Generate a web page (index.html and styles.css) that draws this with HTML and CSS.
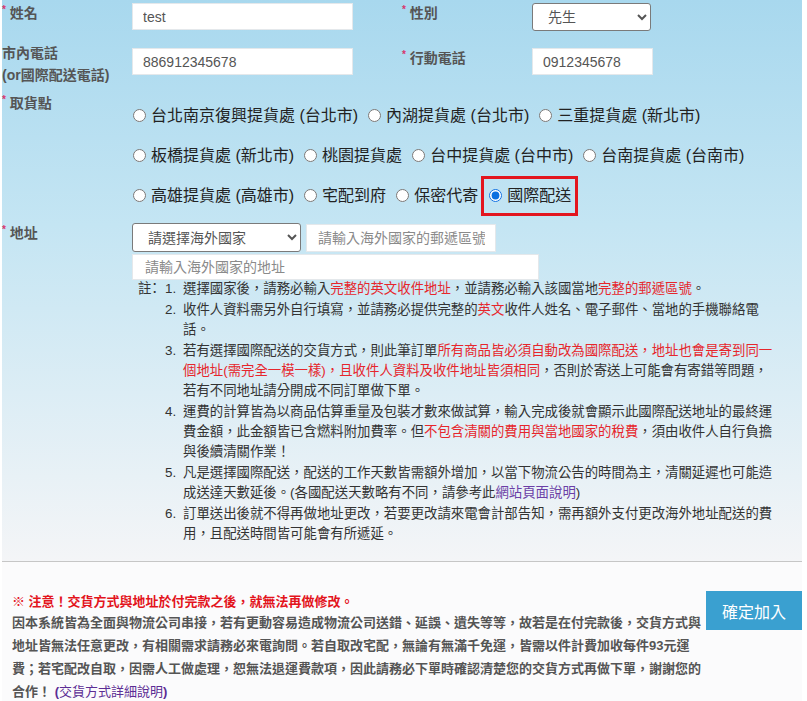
FILE: index.html
```html
<!DOCTYPE html>
<html lang="zh-Hant">
<head>
<meta charset="utf-8">
<title>訂購資料</title>
<link rel="stylesheet" href="styles.css">
</head>
<body>
<div class="page">
  <div class="panel">
    <div class="row row-name">
      <div class="label"><span class="req">*</span> 姓名</div>
      <div class="field"><input class="txt w-name" type="text" value="test"></div>
      <div class="label"><span class="req">*</span> 性別</div>
      <div class="field"><select class="sel w-sex"><option>先生</option><option>小姐</option></select></div>
    </div>
    <div class="row row-phone">
      <div class="label label-2l">市內電話<br>(or國際配送電話)</div>
      <div class="field pt"><input class="txt w-name" type="text" value="886912345678"></div>
      <div class="label pt"><span class="req">*</span> 行動電話</div>
      <div class="field pt"><input class="txt w-mobile" type="text" value="0912345678"></div>
    </div>
    <div class="row row-pick">
      <div class="label"><span class="req">*</span> 取貨點</div>
      <div class="opts">
        <div class="opt-line">
          <label class="opt"><input type="radio" name="pick">台北南京復興提貨處 (台北市)</label><label class="opt"><input type="radio" name="pick">內湖提貨處 (台北市)</label><label class="opt"><input type="radio" name="pick">三重提貨處 (新北市)</label>
        </div>
        <div class="opt-line">
          <label class="opt"><input type="radio" name="pick">板橋提貨處 (新北市)</label><label class="opt"><input type="radio" name="pick">桃園提貨處</label><label class="opt"><input type="radio" name="pick">台中提貨處 (台中市)</label><label class="opt"><input type="radio" name="pick">台南提貨處 (台南市)</label>
        </div>
        <div class="opt-line">
          <label class="opt"><input type="radio" name="pick">高雄提貨處 (高雄市)</label><label class="opt"><input type="radio" name="pick">宅配到府</label><label class="opt"><input type="radio" name="pick">保密代寄</label><label class="opt hl"><input type="radio" name="pick" checked>國際配送</label>
        </div>
      </div>
    </div>
    <div class="row row-addr">
      <div class="label"><span class="req">*</span> 地址</div>
      <div class="addr">
        <div class="addr-top">
          <select class="sel w-country"><option>請選擇海外國家</option></select>
          <input class="txt w-zip" type="text" placeholder="請輸入海外國家的郵遞區號">
        </div>
        <input class="txt w-addr" type="text" placeholder="請輸入海外國家的地址">
      </div>
    </div>
    <div class="notes">
      <span class="note-head">註：</span>
      <ol class="note-list">
        <li><span class="t">選擇國家後，請務必輸入<span class="red">完整的英文收件地址</span>，並請務必輸入該國當地<span class="red">完整的郵遞區號</span>。</span></li>
        <li><span class="t">收件人資料需另外自行填寫，並請務必提供完整的<span class="red">英文</span>收件人姓名、電子郵件、當地的手機聯絡電話。</span></li>
        <li><span class="t">若有選擇國際配送的交貨方式，則此筆訂單<span class="red">所有商品皆必須自動改為國際配送，地址也會是寄到同一個地址(需完全一模一樣)，且收件人資料及收件地址皆須相同</span>，否則於寄送上可能會有寄錯等問題，若有不同地址請分開成不同訂單做下單。</span></li>
        <li><span class="t">運費的計算皆為以商品估算重量及包裝才數來做試算，輸入完成後就會顯示此國際配送地址的最終運費金額，此金額皆已含燃料附加費率。但<span class="red">不包含清關的費用與當地國家的稅費</span>，須由收件人自行負擔與後續清關作業！</span></li>
        <li><span class="t">凡是選擇國際配送，配送的工作天數皆需額外增加，以當下物流公告的時間為主，清關延遲也可能造成送達天數延後。(各國配送天數略有不同，請參考此<a class="link" href="#">網站頁面說明</a>)</span></li>
        <li><span class="t">訂單送出後就不得再做地址更改，若要更改請來電會計部告知，需再額外支付更改海外地址配送的費用，且配送時間皆可能會有所遞延。</span></li>
      </ol>
    </div>
  </div>
  <div class="bottom">
    <div class="notice">
      <div class="warn">※ 注意！交貨方式與地址於付完款之後，就無法再做修改。</div>
      <p class="desc">因本系統皆為全面與物流公司串接，若有更動容易造成物流公司送錯、延誤、遺失等等，故若是在付完款後，交貨方式與地址皆無法任意更改，有相關需求請務必來電詢問。若自取改宅配，無論有無滿千免運，皆需以件計費加收每件93元運費；若宅配改自取，因需人工做處理，恕無法退運費款項，因此請務必下單時確認清楚您的交貨方式再做下單，謝謝您的合作！ <a class="link-b" href="#">(<span class="link-in">交貨方式詳細說明</span>)</a></p>
    </div>
    <button class="btn" type="button">確定加入</button>
  </div>
</div>
</body>
</html>
```
FILE: styles.css
```css
* { box-sizing: border-box; }
body {
  margin: 0;
  background: #ffffff;
  font-family: "Liberation Sans", "Noto Sans CJK TC", sans-serif;
  color: #333;
}
.page {
  width: 800px;
  margin-left: 2px;
}
.panel {
  background: linear-gradient(180deg, #a8d8ee 0%, #c4e5f3 40%, #f4f5f7 100%);
  padding: 3px 0 16px;
  border-bottom: 1px solid #c6c6c6;
}
.row {
  display: grid;
  grid-template-columns: 130px 270px 130px 1fr;
  align-items: start;
}
.label {
  font-size: 14px;
  font-weight: bold;
  color: #555;
  line-height: 20px;
  white-space: nowrap;
}
.label-2l { line-height: 22px; }
.req {
  color: #d8346a;
  font-size: 10px;
  vertical-align: top;
  line-height: 14px;
}
.pt { padding-top: 6px; }
.row-name { height: 39px; }
.row-phone { height: 51px; }
.txt {
  display: block;
  height: 27px;
  border: 1px solid #e4e8eb;
  background: #fff;
  padding: 0 10px;
  font-family: "Liberation Sans", "Noto Sans CJK TC", sans-serif;
  font-size: 14px;
  color: #555;
  outline: none;
}
.txt::placeholder { color: #8a8a8a; }
.sel {
  display: block;
  height: 28px;
  border: 1px solid #7a7a7a;
  border-radius: 3px;
  background: #fff;
  padding: 0 6px 0 11px;
  font-family: "Liberation Sans", "Noto Sans CJK TC", sans-serif;
  font-size: 14px;
  color: #555;
}
.w-name { width: 221px; }
.w-sex { width: 119px; }
.w-mobile { width: 121px; }
.row-pick { grid-template-columns: 130px 1fr; }
.opts {
  margin-top: 3px;
  font-size: 16px;
  color: #222;
}
.opt-line {
  height: 40px;
  line-height: 40px;
  white-space: nowrap;
}
.opt {
  display: inline-block;
  margin-right: 9px;
}
.opt input {
  width: 13px;
  height: 13px;
  margin: 0 5px 0 1px;
  vertical-align: -1px;
  accent-color: #0b6fe0;
}
.hl {
  height: 40px;
  line-height: 34px;
  border: 3px solid #e3161f;
  padding: 0 4px 0 4px;
  margin-left: -6px;
}
.row-addr {
  grid-template-columns: 130px 1fr;
  margin-top: 7px;
}
.addr-top {
  display: flex;
  align-items: flex-start;
  gap: 5px;
}
.w-country { width: 169px; height: 29px; }
.w-zip { width: 190px; height: 28px; margin-top: 1px; padding-left: 11px; }
.w-addr { width: 407px; height: 26px; margin-top: 2px; padding-left: 12px; }
.notes {
  display: flex;
  align-items: flex-start;
  padding-left: 136px;
  margin-top: -1px;
  font-size: 13.4px;
  line-height: 20px;
  color: #333;
}
.note-head {
  width: 24px;
  flex: none;
  white-space: nowrap;
  font-feature-settings: "halt";
}
.note-list {
  margin: 0;
  padding: 0;
  list-style: none;
  counter-reset: n;
}
.note-list li {
  display: flex;
  counter-increment: n;
  margin-bottom: 1px;
}
.note-list li::before {
  content: counter(n) ".";
  flex: none;
  width: 18px;
  padding-left: 3px;
  text-align: left;
  font-family: "Liberation Sans", sans-serif;
}
.note-list .t {
  width: 592px;
}
.red { color: #e6262c; }
.link { color: #6b3fa6; text-decoration: none; }
.bottom {
  display: flex;
  align-items: flex-start;
  padding: 30px 0 0 10px;
  background: #fbfbfc;
}
.notice {
  width: 694px;
  flex: none;
}
.warn {
  font-size: 13px;
  line-height: 20px;
  font-weight: bold;
  color: #e3141c;
}
.desc {
  margin: -1px 0 0;
  font-size: 13px;
  line-height: 23px;
  font-weight: bold;
  color: #555;
}
.link-b {
  color: #5b2d94;
  text-decoration: none;
}
.link-in { font-weight: normal; }
.btn {
  margin-left: auto;
  width: 96px;
  height: 39px;
  border: none;
  background: #3aa0d0;
  color: #fff;
  font-family: "Liberation Sans", "Noto Sans CJK TC", sans-serif;
  font-size: 16px;
  margin-top: -1px;
}
```
